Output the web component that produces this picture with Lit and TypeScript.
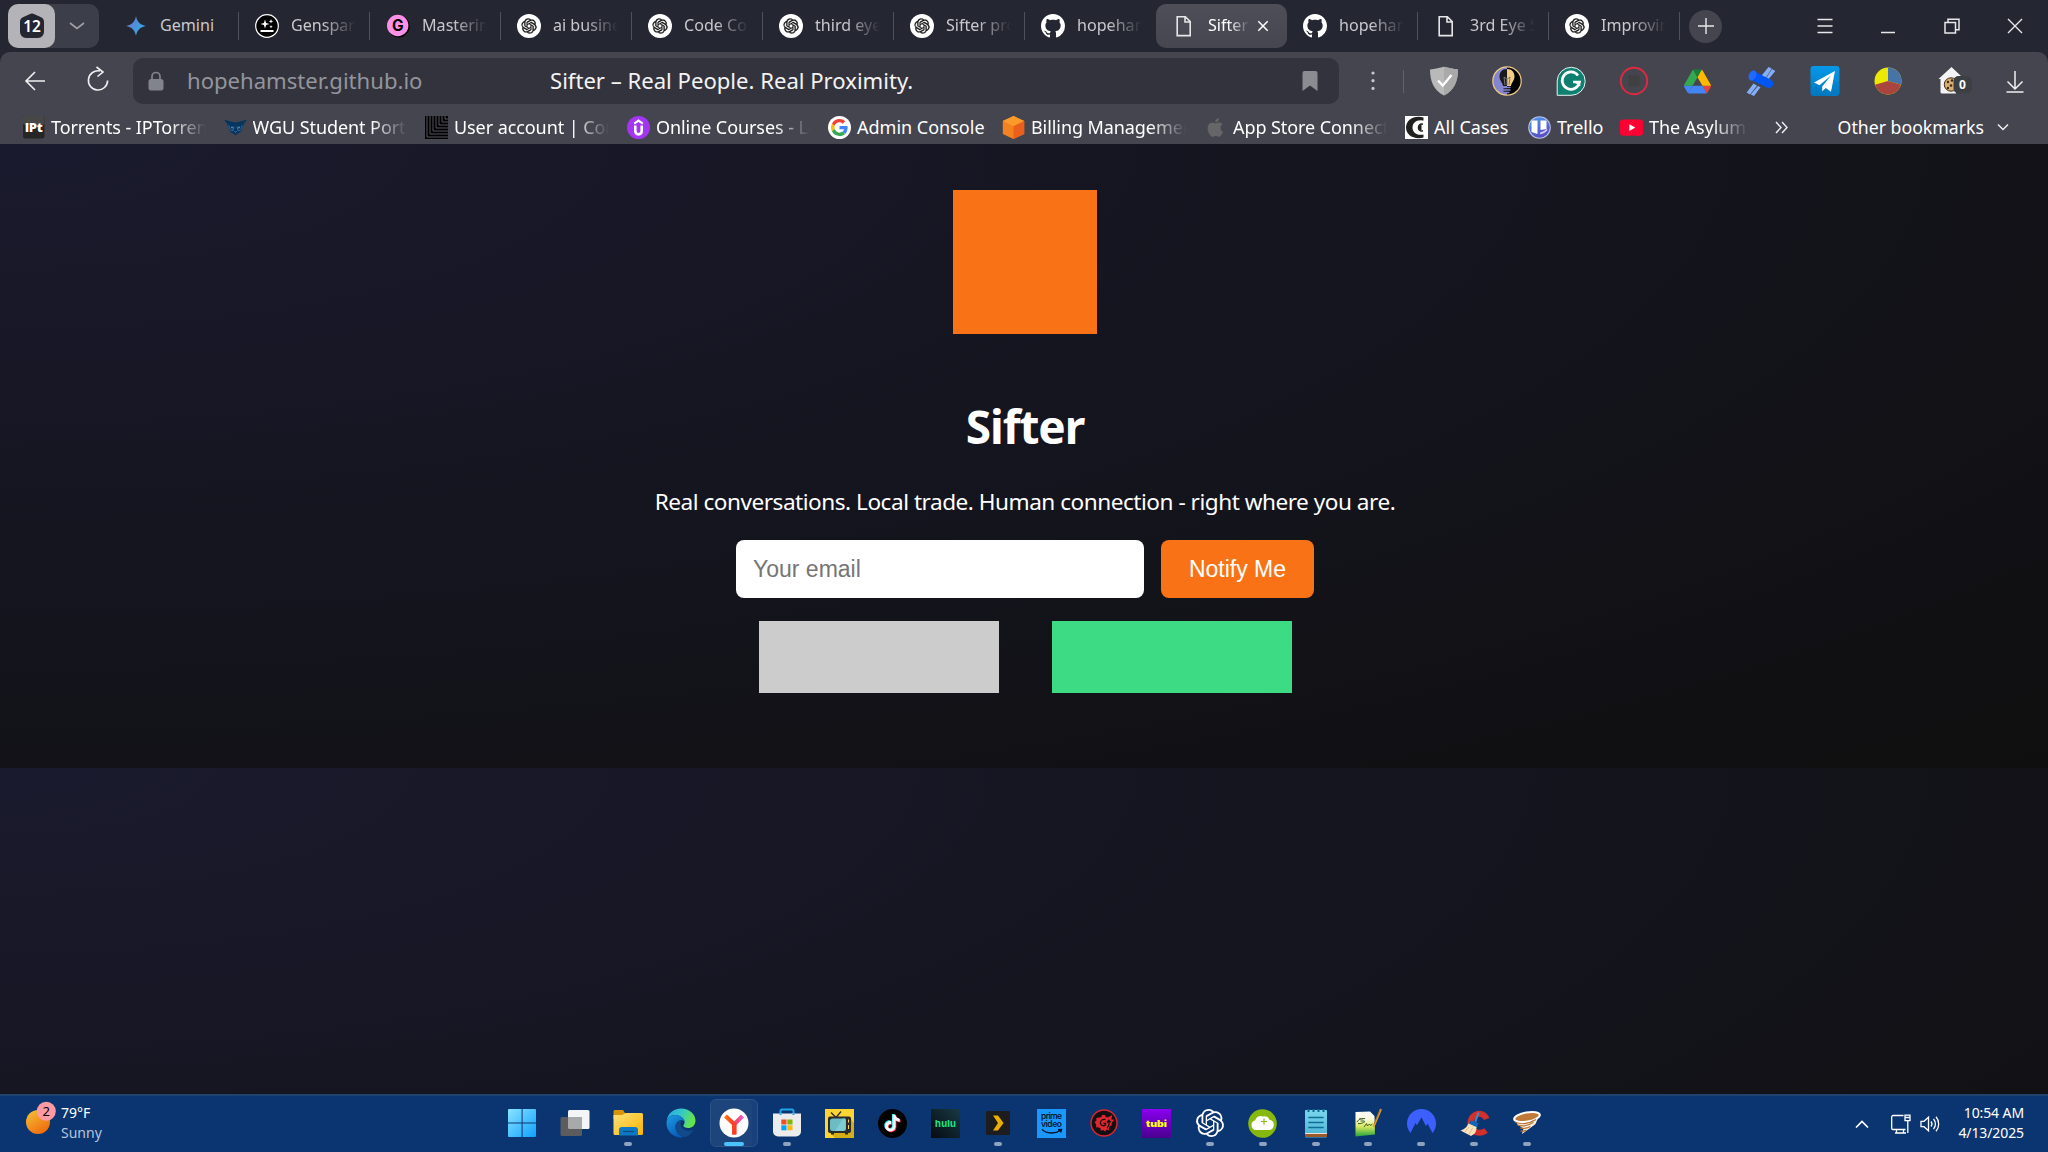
import { LitElement, html, svg, css, nothing, TemplateResult } from "lit";
import { customElement } from "lit/decorators.js";
import { classMap } from "lit/directives/class-map.js";
import { styleMap } from "lit/directives/style-map.js";

const icon = (w: number, h: number, box: string, body: unknown) =>
  html`<svg class="ic" width=${w} height=${h} viewBox=${box} fill="none">${body}</svg>`;

const KNOT =
  "M22.2819 9.8211a5.9847 5.9847 0 0 0-.5157-4.9108 6.0462 6.0462 0 0 0-6.5098-2.9A6.0651 6.0651 0 0 0 4.9807 4.1818a5.9847 5.9847 0 0 0-3.9977 2.9 6.0462 6.0462 0 0 0 .7427 7.0966 5.98 5.98 0 0 0 .511 4.9107 6.051 6.051 0 0 0 6.5146 2.9001A5.9847 5.9847 0 0 0 13.2599 24a6.0557 6.0557 0 0 0 5.7718-4.2058 5.9894 5.9894 0 0 0 3.9977-2.9001 6.0557 6.0557 0 0 0-.7475-7.0729zm-9.022 12.6081a4.4755 4.4755 0 0 1-2.8764-1.0408l.1419-.0804 4.7783-2.7582a.7948.7948 0 0 0 .3927-.6813v-6.7369l2.02 1.1686a.071.071 0 0 1 .038.052v5.5826a4.504 4.504 0 0 1-4.4945 4.4944zm-9.6607-4.1254a4.4708 4.4708 0 0 1-.5346-3.0137l.142.0852 4.783 2.7582a.7712.7712 0 0 0 .7806 0l5.8428-3.3685v2.3324a.0804.0804 0 0 1-.0332.0615L9.74 19.9502a4.4992 4.4992 0 0 1-6.1408-1.6464zM2.3408 7.8956a4.485 4.485 0 0 1 2.3655-1.9728V11.6a.7664.7664 0 0 0 .3879.6765l5.8144 3.3543-2.0201 1.1685a.0757.0757 0 0 1-.071 0l-4.8303-2.7865A4.504 4.504 0 0 1 2.3408 7.872zm16.5963 3.8558L13.1038 8.364 15.1192 7.2a.0757.0757 0 0 1 .071 0l4.8303 2.7913a4.4944 4.4944 0 0 1-.6765 8.1042v-5.6772a.79.79 0 0 0-.407-.667zm2.0107-3.0231l-.142-.0852-4.7735-2.7818a.7759.7759 0 0 0-.7854 0L9.409 9.2297V6.8974a.0662.0662 0 0 1 .0284-.0615l4.8303-2.7866a4.4992 4.4992 0 0 1 6.6802 4.66zM8.3065 12.863l-2.02-1.1638a.0804.0804 0 0 1-.038-.0567V6.0742a4.4992 4.4992 0 0 1 7.3757-3.4537l-.142.0805L8.704 5.459a.7948.7948 0 0 0-.3927.6813zm1.0976-2.3654l2.602-1.4998 2.6069 1.4998v2.9994l-2.5974 1.4997-2.6067-1.4997Z";
const NOTE =
  "M12.525.02c1.31-.02 2.61-.01 3.91-.02.08 1.53.63 3.09 1.75 4.17 1.12 1.11 2.7 1.62 4.24 1.79v4.03c-1.44-.05-2.89-.35-4.2-.97-.57-.26-1.1-.59-1.62-.93-.01 2.92.01 5.84-.02 8.75-.08 1.4-.54 2.79-1.35 3.94-1.31 1.92-3.58 3.17-5.91 3.21-1.43.08-2.86-.31-4.08-1.03-2.02-1.19-3.44-3.37-3.65-5.71-.02-.5-.03-1-.01-1.49.18-1.9 1.12-3.72 2.58-4.96 1.66-1.44 3.98-2.13 6.15-1.72.02 1.48-.04 2.96-.04 4.44-.99-.32-2.15-.23-3.02.37-.63.41-1.11 1.04-1.36 1.75-.21.51-.15 1.07-.14 1.61.24 1.64 1.82 3.02 3.5 2.87 1.12-.01 2.19-.66 2.77-1.61.19-.33.4-.67.41-1.06.1-1.79.06-3.57.07-5.36.01-4.03-.01-8.05.02-12.07z";
const APPLE =
  "M12.152 6.896c-.948 0-2.415-1.078-3.96-1.04-2.04.027-3.91 1.183-4.961 3.014-2.117 3.675-.546 9.103 1.519 12.09 1.013 1.454 2.208 3.09 3.792 3.039 1.52-.065 2.09-.987 3.935-.987 1.831 0 2.35.987 3.96.948 1.637-.026 2.676-1.48 3.676-2.948 1.156-1.688 1.636-3.325 1.662-3.415-.039-.013-3.182-1.221-3.22-4.857-.026-3.04 2.48-4.494 2.597-4.559-1.429-2.09-3.623-2.324-4.39-2.376-2-.156-3.675 1.09-4.61 1.09zM15.53 3.83c.843-1.012 1.4-2.427 1.245-3.83-1.207.052-2.662.805-3.532 1.818-.78.896-1.454 2.338-1.273 3.714 1.338.104 2.715-.831 3.56-1.702";
const OCTO =
  "M8 0C3.58 0 0 3.58 0 8c0 3.54 2.29 6.53 5.47 7.59.4.07.55-.17.55-.38 0-.19-.01-.82-.01-1.49-2.01.37-2.53-.49-2.69-.94-.09-.23-.48-.94-.82-1.13-.28-.15-.68-.52-.01-.53.63-.01 1.08.58 1.23.82.72 1.21 1.87.87 2.33.66.07-.52.28-.87.51-1.07-1.78-.2-3.64-.89-3.64-3.95 0-.87.31-1.59.82-2.15-.08-.2-.36-1.02.08-2.12 0 0 .67-.21 2.2.82.64-.18 1.32-.27 2-.27s1.36.09 2 .27c1.53-1.04 2.2-.82 2.2-.82.44 1.1.16 1.92.08 2.12.51.56.82 1.27.82 2.15 0 3.07-1.87 3.75-3.65 3.95.29.25.54.73.54 1.48 0 1.07-.01 1.93-.01 2.2 0 .21.15.46.55.38A8.01 8.01 0 0 0 16 8c0-4.42-3.58-8-8-8z";

/* Tab favicons, 24px box */
const chatIcon = () => icon(24, 24, "0 0 24 24", svg`<circle cx="12" cy="12" r="12" fill="#fff"/><path transform="translate(4.4 4.4) scale(.633)" d=${KNOT} fill="#111" stroke="#111" stroke-width=".5"/>`);
const githubIcon = () => icon(24, 24, "0 0 16 16", svg`<path d=${OCTO} fill="#fff"/>`);
const fileIcon = () => icon(24, 24, "0 0 24 24", svg`<path d="M5.200 2.800h8.200l4.800 4.800v14H5.200zM13 3v5h5" stroke="#e6e6e8" stroke-width="1.600"/>`);
const geminiIcon = () => icon(24, 24, "0 0 24 24", svg`<defs><linearGradient id="gem" x1="0" y1="0" x2="1" y2=".6"><stop offset="0" stop-color="#b070b8"/><stop offset=".4" stop-color="#5a86d8"/><stop offset="1" stop-color="#2bb0e0"/></linearGradient></defs><path d="M12 2c.9 5.600 4.400 9.100 10 10-5.600.9-9.100 4.400-10 10-.9-5.600-4.400-9.100-10-10 5.600-.9 9.100-4.400 10-10z" fill="url(#gem)"/>`);
const sparkIcon = () => icon(24, 24, "0 0 24 24", svg`<circle cx="12" cy="12" r="11.300" fill="#000" stroke="#fff" stroke-width="1.200"/><path d="M10 5.500l1.100 3.400 3.400 1.100-3.400 1.100-1.100 3.400-1.100-3.400-3.400-1.100 3.400-1.100zM16 5l.6 1.700 1.700.6-1.700.6-.6 1.700-.6-1.700-1.700-.6 1.700-.6zM16 11l.5 1.300 1.300.5-1.300.5-.5 1.300-.5-1.300-1.300-.5 1.300-.5z" fill="#fff"/><path d="M5.500 17h13" stroke="#fff" stroke-width="2"/>`);
const masterIcon = () => icon(24, 24, "0 0 24 24", svg`<circle cx="12.700" cy="12.500" r="11" fill="#000"/><circle cx="11.700" cy="11.500" r="10.700" fill="#ff90e8"/><text x="11.700" y="17" text-anchor="middle" font-family="Inter,sans-serif" font-weight="700" font-size="15.500" fill="#000">G</text>`);

/* Bookmark favicons, 23px box */
const iptIcon = () => icon(23, 23, "0 0 23 23", svg`<rect x="1" y="0" width="21.500" height="22.500" rx="2" fill="#262626"/><rect x="1" y="0" width="21.500" height="9" rx="2" fill="#474747"/><text x="11.700" y="16" text-anchor="middle" textLength="18" font-family="Open Sans,sans-serif" font-weight="800" font-size="13" fill="#fff">IPt</text>`);
const owlIcon = () => icon(23, 23, "0 0 23 23", svg`<path d="M.5 4c3 0 5 1.500 11 2.500C17.500 5.500 19.500 4 22.500 4c-.5 2-2.500 3-3 4.500-.3 3.500-1.500 5.500-3 7.500-1.500 1-3 1.500-5 3.500-2-2-3.500-2.500-5-3.500-1.500-2-2.700-4-3-7.500C3 7 1 6 .5 4z" fill="#06365f"/><path d="M5 9.500c0 4 1.500 5.300 4 5l1-4M18 9.500c0 4-1.500 5.300-4 5l-1-4M10.300 15l1.200 1.500 1.200-1.500" stroke="#3a6f97" stroke-width="1"/><circle cx="8" cy="11.500" r="1" fill="#5e8caf"/><circle cx="15" cy="11.500" r="1" fill="#5e8caf"/>`);
const mazeIcon = () => icon(23, 23, "0 0 23 23", svg`<rect width="23" height="23" fill="#000"/><path d="M2 0v21h21M5 0v18h18M8 0v15h15M11 0v12h12M14 0v9h9M17 0v6h6M20 0v3h3" stroke="#60606a" stroke-width=".9"/>`);
const udemyIcon = () => icon(23, 23, "0 0 23 23", svg`<circle cx="11.500" cy="11.500" r="11.500" fill="#a435f0"/><path d="M7.200 7.600l4.300-2.900 4.300 2.900" stroke="#fff" stroke-width="2.200"/><path d="M8.300 9.500v5.300c0 4.700 6.400 4.700 6.400 0V9.500" stroke="#fff" stroke-width="2.600"/>`);
const googleIcon = () => icon(23, 23, "0 0 23 23", svg`<circle cx="11.500" cy="11.500" r="11.500" fill="#fff"/><g transform="translate(3 3) scale(.354)"><path fill="#EA4335" d="M24 9.500c3.540 0 6.710 1.220 9.210 3.600l6.850-6.850C35.900 2.380 30.470 0 24 0 14.620 0 6.510 5.380 2.560 13.220l7.980 6.190C12.430 13.720 17.740 9.500 24 9.500z"/><path fill="#4285F4" d="M46.980 24.550c0-1.570-.15-3.090-.38-4.550H24v9.020h12.940c-.58 2.960-2.260 5.480-4.780 7.180l7.730 6c4.510-4.180 7.090-10.360 7.090-17.650z"/><path fill="#FBBC05" d="M10.530 28.590c-.48-1.450-.76-2.990-.76-4.590s.27-3.140.76-4.590l-7.980-6.190C.92 16.460 0 20.120 0 24c0 3.880.92 7.540 2.560 10.780l7.970-6.190z"/><path fill="#34A853" d="M24 48c6.480 0 11.930-2.130 15.890-5.810l-7.730-6c-2.150 1.450-4.920 2.300-8.160 2.300-6.260 0-11.570-4.220-13.470-9.910l-7.980 6.190C6.510 42.620 14.620 48 24 48z"/></g>`);
const cubeIcon = () => icon(23, 23, "0 0 23 23", svg`<path d="M11.500 0l10.700 5v13L11.500 23 .8 18V5z" fill="#f58220"/><path d="M.8 5l10.700-5 10.700 5-10.700 5.200z" fill="#fb9a2b"/><path d="M11.500 10.200L22.200 5v13L11.500 23z" fill="#ea5f1c"/>`);
const appleIcon = () => icon(23, 23, "0 0 24 24", svg`<path transform="translate(2 2) scale(.82)" d=${APPLE} fill="#666668"/>`);
const casesIcon = () => icon(23, 23, "0 0 23 23", svg`<rect width="23" height="23" fill="#fff"/><path d="M18.500 1.500C9-1 1 4 1 11.500S9 24 18.500 21.500v-4h-2V5.500h2z" fill="#20201f"/><path d="M20 4.800C12 2.500 7.500 6.500 7.500 11.500s4.500 9 12.500 6.700V14c-3 1.300-6.200.5-6.200-2.500S17 7.700 20 9z" fill="#fff"/><path d="M18 8.200c-3.200-.6-4.500 1-4.500 3.300s1.300 3.900 4.500 3.300" stroke="#20201f" stroke-width="1.600"/>`);
const trelloIcon = () => icon(23, 23, "0 0 23 23", svg`<defs><linearGradient id="tre" x1="0" y1="0" x2=".4" y2="1"><stop offset="0" stop-color="#4d9bf5"/><stop offset="1" stop-color="#5a4fc4"/></linearGradient></defs><circle cx="11.500" cy="11.500" r="11.300" fill="#b9c3e6"/><circle cx="11.500" cy="11.500" r="10.300" fill="url(#tre)"/><path d="M3.500 4.500h6v13.500l-6-2zM12.500 4.500h6v8.500l-6 1z" fill="#fff"/><path d="M12 17.500c3-.5 5.500-2 7-4" stroke="#d7cdfa" stroke-width="1.500"/>`);
const tubeIcon = () => icon(23, 23, "0 0 23 23", svg`<rect y="3.500" width="23" height="16.300" rx="3" fill="#ff0033"/><path d="M9.300 8.300l6 3.300-6 3.300z" fill="#fff"/>`);

/* Extension icons, 30px box */
const shieldExt = () => icon(30, 30, "0 0 30 30", svg`<path d="M1 3.500C6 3 11 2 15 .8c4 1.200 9 2.200 14 2.700 0 12-4 21-14 26C5 24.500 1 15.500 1 3.500z" fill="#b9b9b9"/><path d="M15 .8c4 1.200 9 2.200 14 2.700 0 12-4 21-14 26z" fill="#a9a9a9"/><path d="M9 14.500l4.800 5L22.500 9" stroke="#fff" stroke-width="2.400"/>`);
const bulbExt = () => icon(30, 30, "0 0 30 30", svg`<circle cx="15" cy="15" r="14.200" fill="#000"/><path d="M15 .8a14.200 14.200 0 0 0 0 28.400z" fill="#8585cf"/><path d="M15 3c-5 0-7.500 3.500-7.500 7.500s3 6 3.500 9.500h4z" fill="#1a1a1e"/><path d="M15 3c5 0 7.500 3.500 7.500 7.500s-3 6-3.500 9.500h-4z" fill="#f3cc86"/><path d="M12 11l1 8M18 11l-1 8M12 11l3 2 3-2M15 13v6" stroke="#777" stroke-width="1"/><path d="M11.500 21.500h7M11.500 24h7M12.500 26.500h5" stroke="#8585cf" stroke-width="1.300"/><path d="M11.500 22.700h3.500M11.500 25.200h3.500" stroke="#1a1a1e" stroke-width="1"/><circle cx="15" cy="15" r="14.200" stroke="#f3cc86" stroke-width="1.200"/>`);
const grammarExt = () => icon(30, 30, "0 0 30 30", svg`<path d="M1.200 29.300V15A14 14 0 1 1 15 29.300z" fill="#0f8070" stroke="#e8f3f1" stroke-width="1"/><path d="M22 9.500a8.700 8.700 0 1 0 1.500 6.500h-6.500" stroke="#fff" stroke-width="2.700"/><path d="M19.500 17.500l4-1.500 1 4" fill="#fff"/>`);
const recordExt = () => icon(30, 30, "0 0 30 30", svg`<circle cx="15" cy="15" r="13.200" stroke="#dc2a40" stroke-width="2"/><rect x="9.500" y="9.500" width="11" height="11" fill="#404040"/>`);
const driveExt = () => icon(27, 25, "0 0 87.3 78", svg`<path d="m6.600 66.850 3.850 6.650c.8 1.400 1.950 2.500 3.300 3.300l13.750-23.800h-27.500c0 1.550.4 3.100 1.200 4.500z" fill="#4285f4"/><path d="m43.650 25-13.750-23.800c-1.350.8-2.500 1.900-3.300 3.300l-25.400 44a9.060 9.060 0 0 0-1.200 4.500h27.500z" fill="#34a853"/><path d="m73.550 76.800c1.350-.8 2.500-1.900 3.300-3.300l1.600-2.750 7.650-13.250c.8-1.400 1.200-2.950 1.200-4.500h-27.502l5.852 11.500z" fill="#ea4335"/><path d="m43.650 25 13.750-23.800c-1.350-.8-2.900-1.200-4.500-1.200h-18.500c-1.600 0-3.150.45-4.500 1.200z" fill="#188038"/><path d="m59.800 53h-32.300l-13.750 23.800c1.350.8 2.900 1.200 4.500 1.200h50.800c1.600 0 3.150-.45 4.500-1.200z" fill="#4285f4"/><path d="m73.400 26.500-12.700-22c-.8-1.400-1.950-2.500-3.300-3.300l-13.750 23.800 16.150 28h27.450c0-1.550-.4-3.100-1.200-4.500z" fill="#ffba00"/>`);
const satelliteExt = () => icon(30, 30, "0 0 30 30", svg`<g fill="#85aef8"><path d="M22.500 1l3.200 1.500-6 9.500-4-2.600z"/><path d="M26 3l3.300 2-7 8.500-2-1.500z"/><path d="M7.500 17.500l3.500 2.300-7 8.700-3.300-2z"/><path d="M12 20l2.500 1.300L8 30l-3.300-1.500z"/></g><rect x="3" y="9.500" width="25" height="9" rx="4.500" transform="rotate(26 15.500 14)" fill="#0057f5"/><ellipse cx="6.500" cy="9.500" rx="3.600" ry="5.200" transform="rotate(26 6.500 9.500)" fill="#1f6afc"/>`);
const telegramExt = () => icon(30, 30, "0 0 30 30", svg`<defs><linearGradient id="tg" x1="0" y1="0" x2="0" y2="1"><stop offset="0" stop-color="#0798ea"/><stop offset="1" stop-color="#0077bd"/></linearGradient></defs><rect x=".5" width="29" height="30" rx="3" fill="url(#tg)"/><path d="M25 5L4 16.500l5.500 2.700L21 9.500 12.200 20.500v4.700l3.600-3.100 5.200 3.700z" fill="#fff"/>`);
const pieExt = () => icon(28, 28, "0 0 28 28", svg`<circle cx="14" cy="14" r="13.500" fill="#ece800"/><path d="M14 14V.5a13.500 13.500 0 0 1 13 17.200z" fill="#4673a8"/><path d="M14 14l13 3.700a13.500 13.500 0 0 1-26 0z" fill="#a9443f"/>`);
const cookieExt = () => icon(36, 30, "0 0 36 30", svg`<path d="M4.500 13L17.500 1l9.500 9v3h-5v14.500H8a1.500 1.500 0 0 1-1.500-1.500V13z" fill="#f4f4f4"/><circle cx="17" cy="18.500" r="6.700" fill="#d9ae70" stroke="#3c2a1a" stroke-width="1"/><circle cx="14" cy="16" r="1.200" fill="#3c2a1a"/><circle cx="18" cy="14.500" r="1.200" fill="#3c2a1a"/><circle cx="17" cy="19.500" r="1.300" fill="#3c2a1a"/><circle cx="14" cy="22" r="1.200" fill="#3c2a1a"/><rect x="19.500" y="10" width="18.500" height="17.500" rx="5" fill="#3c4043"/><text x="28.500" y="23" text-anchor="middle" font-family="Noto Sans,sans-serif" font-weight="700" font-size="12" fill="#fff">0</text>`);
const downloadExt = () => icon(30, 30, "0 0 30 30", svg`<path d="M15 5v18M7.500 15.500L15 23l7.500-7.500M6.500 26h17" stroke="#f0f0f2" stroke-width="1.500"/>`);

/* Taskbar icons, 28px box */
const startApp = () => icon(28, 28, "0 0 28 28", svg`<defs><linearGradient id="win" x1="0" y1="0" x2="28" y2="28" gradientUnits="userSpaceOnUse"><stop offset="0" stop-color="#8ae3ff"/><stop offset="1" stop-color="#0fa0ff"/></linearGradient></defs><path d="M0 1a1 1 0 0 1 1-1h12.600v13.600H0zM14.600 0H27a1 1 0 0 1 1 1v12.600H14.600zM0 14.600h13.600V28H1a1 1 0 0 1-1-1zM14.600 14.600H28V27a1 1 0 0 1-1 1H14.600z" fill="url(#win)"/>`);
const viewApp = () => icon(30, 28, "0 0 30 28", svg`<rect x="8" y="1" width="21.500" height="19" rx="1.500" fill="#f4f5f7"/><rect x=".5" y="8" width="21.500" height="19" rx="1.500" fill="#5c5c5e"/><path d="M8 8h12.500A1.500 1.500 0 0 1 22 9.500V20H9.500A1.500 1.500 0 0 1 8 18.500z" fill="#a8a9ab"/>`);
const folderApp = () => icon(30, 28, "0 0 30 28", svg`<defs><linearGradient id="fo" x1="0" y1="0" x2="1" y2="1"><stop offset="0" stop-color="#ffe07c"/><stop offset="1" stop-color="#f9b500"/></linearGradient></defs><path d="M.5 2.500A1.500 1.500 0 0 1 2 1h8l2 3v6H.5z" fill="#d9940a"/><path d="M.5 6h9l3-2h16A1.500 1.500 0 0 1 30 5.500v19a1.500 1.500 0 0 1-1.500 1.500H2A1.500 1.500 0 0 1 .500 24.500z" fill="url(#fo)"/><path d="M6 26.500V21a3 3 0 0 1 3-3h13a3 3 0 0 1 3 3v5.500z" fill="#0f78c4"/><path d="M10 22.500h11" stroke="#0a4a80" stroke-width="1.200"/>`);
const edgeApp = () => icon(30, 30, "0 0 30 30", svg`<defs><linearGradient id="ed1" x1="0" y1="0" x2="1" y2=".3"><stop offset="0" stop-color="#25a5e8"/><stop offset=".55" stop-color="#36c9c6"/><stop offset="1" stop-color="#66e34c"/></linearGradient><linearGradient id="ed2" x1="0" y1="0" x2=".6" y2="1"><stop offset="0" stop-color="#1b9de2"/><stop offset="1" stop-color="#0a5ab8"/></linearGradient></defs><path d="M.7 13C1.500 5.500 7.500.5 15 .5c8.500 0 14.500 6 14.500 12 0 5-3.500 7.500-7.500 7.500-2.500 0-4.700-1-4.700-2.200 0-.8 1.300-1.500 1.300-3.600C18.600 10.500 14 7 9 7 4.500 7 1.500 10 .7 13z" fill="url(#ed1)"/><path d="M.5 15C.7 10 4.500 7 9 7c5 0 8.500 3 9.500 6-4.500-2-9 1-9 6 0 5.500 4.500 9.500 9 10.100-1.300.3-2.300.4-3.500.4C7 29.500.5 23 .5 15z" fill="url(#ed2)"/><path d="M9.500 19c0-4 3-6.800 6.500-6.500-3 3-1 9 5 10 3 .5 5-.3 6.500-.9-1.700 4-5.500 7-9 7.500-4.500-.6-9-4.600-9-10.100z" fill="#114a8b"/>`);
const yandexApp = () => icon(30, 30, "0 0 30 30", svg`<defs><linearGradient id="ya" x1="5" y1="6" x2="24" y2="8" gradientUnits="userSpaceOnUse"><stop offset="0" stop-color="#ff7a00"/><stop offset=".5" stop-color="#fc3f2c"/><stop offset="1" stop-color="#e85ccf"/></linearGradient></defs><circle cx="15" cy="15" r="14.500" fill="#fff"/><path d="M6.500 8l8.800 8.300L23.500 8M15.300 15.500V26.500" stroke="url(#ya)" stroke-width="4.200"/><path d="M15.300 15.500V26.500" stroke="#fc3f1d" stroke-width="4.200"/>`);
const storeApp = () => icon(28, 30, "0 0 28 30", svg`<path d="M7.500 8V3A1.500 1.500 0 0 1 9 1.500h10A1.500 1.500 0 0 1 20.500 3v5" stroke="#1fa3ea" stroke-width="2"/><path d="M0 5.500h28v18a5 5 0 0 1-5 5H5a5 5 0 0 1-5-5z" fill="#ececee"/><path d="M7.500 5.500V7M20.500 5.500V7" stroke="#1fa3ea" stroke-width="2"/><rect x="8.300" y="11.500" width="5.200" height="5" fill="#f04e24"/><rect x="14.300" y="11.500" width="5.200" height="5" fill="#7cba06"/><rect x="8.300" y="17.300" width="5.200" height="5" fill="#07a4ef"/><rect x="14.300" y="17.300" width="5.200" height="5" fill="#fdb90a"/>`);
const tvApp = () => icon(29, 29, "0 0 29 29", svg`<rect width="29" height="29" fill="#fcd535"/><path d="M26 10l3 4v15H10l-5-5z" fill="#d4ae18"/><path d="M6 3.500l5 5 5-6" stroke="#2b2b2b" stroke-width="1.200"/><rect x="3" y="7.500" width="23" height="16.500" rx="2" fill="#2b2b2b"/><rect x="5" y="9.500" width="16" height="12.500" rx="2.500" fill="#6bbcc3"/><path d="M10 22l8-12.500h2.500v10.500l-2 2z" fill="#7fcdd2"/><path d="M23.500 10.500v3M23.500 16v4" stroke="#fcd535" stroke-width="1"/><path d="M6 24.500h3M20 24.500h3" stroke="#2b2b2b" stroke-width="2"/>`);
const tiktokApp = () => icon(29, 29, "0 0 29 29", svg`<circle cx="14.500" cy="14.500" r="14.500" fill="#000"/><g transform="translate(6 5.700) scale(.7)"><path d=${NOTE} transform="translate(-1.200 -1)" fill="#25f4ee"/><path d=${NOTE} transform="translate(1.200 1)" fill="#fe2c55"/><path d=${NOTE} fill="#fff"/></g>`);
const huluApp = () => icon(29, 29, "0 0 29 29", svg`<defs><linearGradient id="hu" x1="1" y1="0" x2="0" y2="1"><stop offset="0" stop-color="#183a44"/><stop offset="1" stop-color="#060a10"/></linearGradient></defs><rect width="29" height="29" fill="url(#hu)"/><text x="14.500" y="18" text-anchor="middle" textLength="21" font-family="Inter,sans-serif" font-weight="700" font-size="9.500" fill="#1ce783">hulu</text>`);
const plexApp = () => icon(24, 24, "0 0 24 24", svg`<rect width="24" height="24" rx="1.500" fill="#1d1d1f"/><path d="M7 4.500h5l5.500 7.500-5.500 7.500H7l5-7.500z" fill="#ebaf00"/>`);
const primeApp = () => icon(29, 29, "0 0 29 29", svg`<rect width="29" height="29" fill="#1a98ff"/><g font-family="Inter,sans-serif" font-weight="600" font-size="8.500" fill="#06182e" text-anchor="middle"><text x="14.500" y="10" textLength="21">prime</text><text x="14.500" y="18.300" textLength="21">video</text></g><path d="M5 20.500c5 4.500 13 4.500 18.500 1M21 20.700l3.500-.2-.8 3" stroke="#06182e" stroke-width="1.400"/>`);
const gearApp = () => icon(28, 28, "0 0 28 28", svg`<circle cx="14" cy="14" r="13" fill="#140f12" stroke="#d8262e" stroke-width="1.500"/><path d="M9.500 8.500l2-.5.500-2h3l.7 2 2 .5 4.500-2.500-.8 4.500 3 .2-2.700 3v2.800l-2.200.7-.7 2 .2 2.300-2.300-.9-1.700 1.900-1.700-1.500-2.500.8-.3-2.500-2.500-1-1.800.2v-3L4.500 13l2-1.500-.3-2.500z" fill="#e0262f"/><path d="M15.500 10.500c-3.500-.5-5.500 1.500-5 4s3.500 3 5 1.300v-1.500h-2M17 19c2.200-2 2.300-5 1.800-7.500l-1.800 2M18.800 11.500l2 1.500" stroke="#140f12" stroke-width="1.300"/>`);
const tubiApp = () => icon(29, 29, "0 0 29 29", svg`<defs><linearGradient id="tu" x1="0" y1="0" x2="0" y2="1"><stop offset="0" stop-color="#8a00f0"/><stop offset="1" stop-color="#4a0090"/></linearGradient></defs><rect width="29" height="29" fill="url(#tu)"/><text x="14.500" y="17.500" text-anchor="middle" textLength="21" lengthAdjust="spacingAndGlyphs" font-family="Inter,sans-serif" font-weight="900" font-size="9" fill="#ffff13">tubi</text>`);
const knotApp = () => icon(28, 28, "0 0 24 24", svg`<path d=${KNOT} fill="#fff"/>`);
const cloudApp = () => icon(29, 29, "0 0 29 29", svg`<circle cx="14.500" cy="14.500" r="14.300" fill="#86b80e"/><path d="M8 21a5 5 0 0 1-.8-9.800A5.500 5.500 0 0 1 15 7.500a5 5 0 0 1 6.500 3.200A5.200 5.200 0 0 1 21 21z" fill="#fff"/><path d="M16 9.500v6M13 12.500h6" stroke="#86b80e" stroke-width="1.200"/>`);
const notepadApp = () => icon(22, 30, "0 0 22 30", svg`<defs><linearGradient id="np" x1="0" y1="0" x2="0" y2="1"><stop offset="0" stop-color="#7ad6ee"/><stop offset="1" stop-color="#4bb2d4"/></linearGradient></defs><rect y="2" width="22" height="27.500" rx="1" fill="url(#np)"/><path d="M0 25.500h22V29H0z" fill="#9a5a2c"/><path d="M0 25.500h22" stroke="#e8e2da"/><path d="M3.500 1v3M8.500 1v3M13.500 1v3M18.500 1v3" stroke="#0f6a92" stroke-width="2"/><path d="M4 9.500h14M4 14.500h14M4 19.500h14" stroke="#0d6f94" stroke-width="1.600" stroke-linecap="round"/>`);
const nppApp = () => icon(28, 30, "0 0 28 30", svg`<defs><linearGradient id="pp" x1="0" y1="0" x2="0" y2="1"><stop offset="0" stop-color="#fdfdf8"/><stop offset=".3" stop-color="#fafbe0"/><stop offset=".6" stop-color="#d9e95e"/><stop offset="1" stop-color="#23a43a"/></linearGradient></defs><path d="M1.500 4l14.500-.5 4.500 4.500.5 18.500L1.500 28.500z" fill="url(#pp)"/><path d="M3 14c2-3 4-3.500 6-3M5 11l6-.5M4 15.500c3 .5 5-.5 7-2M6.500 13h4M10 19l2.500-3.500 1 2.500 2-2 1 1.500 2-1.500" stroke="#3c5f2a" stroke-width="1"/><path d="M27 1l-6.500 15.500-1 2.500" stroke="#e3a02f" stroke-width="2"/><path d="M26.300 1.200l-6 14.500" stroke="#7d4b12" stroke-width=".6"/>`);
const nordApp = () => icon(29, 29, "0 0 29 29", svg`<path d="M3.500 24A14.500 14.500 0 1 1 25.500 24L20.500 14.500l-1.500 2.700-4.500-9-4.500 8L8.500 14z" fill="#3e5fff"/>`);
const cleanerApp = () => icon(29, 29, "0 0 29 29", svg`<path d="M26.500 10C24.500 5 19 3.500 15 6s-6 8-3.500 13 9.500 6.500 14.500 2.500" stroke="#d3302a" stroke-width="6"/><path d="M18.500 3.500L15.300 13" stroke="#2f8fe0" stroke-width="2"/><path d="M10.500 11.500l8 2.500-1.500 4.500-8-3z" fill="#1266b3"/><path d="M8.500 14.500l8 3.500c.2 4.500-2 7.500-5.500 9L.500 21.500c3.500-1 6.500-3.500 8-7z" fill="#fbe3bd"/><path d="M9 18l-4 5M12.500 19l-3.500 6.500" stroke="#d9b27e" stroke-width=".8"/>`);
const tornadoApp = () => icon(28, 24, "0 0 28 24", svg`<path d="M2 8l23.500-2-3 7-6 4.500-7.500 5.500 1.500-5.500-6-4z" fill="#fff3e4"/><ellipse cx="14" cy="6" rx="13" ry="4.500" transform="rotate(-10 14 6)" fill="#c07a38" stroke="#fff" stroke-width="2"/><path d="M2 11c7 3.500 14 1.500 21-2.500M4.500 14c6 2 11 .5 16-2.500M7 17c4 1.200 7 .3 10.500-1.500M7.500 20c2.500.4 3.500.2 6-1" stroke="#b87333" stroke-width="1.200"/>`);

interface Tab { label: string; icon: () => TemplateResult; active?: boolean; full?: boolean; noSep?: boolean }
const TABS: Tab[] = [
  { label: "Gemini", icon: geminiIcon, full: true },
  { label: "Genspar", icon: sparkIcon },
  { label: "Masterin", icon: masterIcon },
  { label: "ai busine", icon: chatIcon },
  { label: "Code Co", icon: chatIcon },
  { label: "third eye", icon: chatIcon },
  { label: "Sifter pro", icon: chatIcon },
  { label: "hopeham", icon: githubIcon, noSep: true },
  { label: "Sifter", icon: fileIcon, active: true, noSep: true },
  { label: "hopeham", icon: githubIcon },
  { label: "3rd Eye S", icon: fileIcon },
  { label: "Improvin", icon: chatIcon },
];

interface Mark { label: string; icon: () => TemplateResult; width: number; fade?: boolean }
const MARKS: Mark[] = [
  { label: "Torrents - IPTorrent", icon: iptIcon, width: 201.5, fade: true },
  { label: "WGU Student Porta", icon: owlIcon, width: 201.5, fade: true },
  { label: "User account | Con", icon: mazeIcon, width: 202, fade: true },
  { label: "Online Courses - Le", icon: udemyIcon, width: 201, fade: true },
  { label: "Admin Console", icon: googleIcon, width: 174 },
  { label: "Billing Managemen", icon: cubeIcon, width: 202, fade: true },
  { label: "App Store Connect", icon: appleIcon, width: 201, fade: true },
  { label: "All Cases", icon: casesIcon, width: 123 },
  { label: "Trello", icon: trelloIcon, width: 92 },
  { label: "The Asylum", icon: tubeIcon, width: 146, fade: true },
];

const EXTENSIONS = [shieldExt, bulbExt, grammarExt, recordExt, driveExt, satelliteExt, telegramExt, pieExt, cookieExt, downloadExt];

interface App { icon: () => TemplateResult; state: "idle" | "open" | "active" }
const APPS: App[] = [
  { icon: startApp, state: "idle" },
  { icon: viewApp, state: "idle" },
  { icon: folderApp, state: "open" },
  { icon: edgeApp, state: "idle" },
  { icon: yandexApp, state: "active" },
  { icon: storeApp, state: "open" },
  { icon: tvApp, state: "idle" },
  { icon: tiktokApp, state: "idle" },
  { icon: huluApp, state: "idle" },
  { icon: plexApp, state: "open" },
  { icon: primeApp, state: "idle" },
  { icon: gearApp, state: "idle" },
  { icon: tubiApp, state: "idle" },
  { icon: knotApp, state: "open" },
  { icon: cloudApp, state: "open" },
  { icon: notepadApp, state: "open" },
  { icon: nppApp, state: "open" },
  { icon: nordApp, state: "open" },
  { icon: cleanerApp, state: "open" },
  { icon: tornadoApp, state: "open" },
];

const shared = css`
  * { box-sizing: border-box; }
  .ic { display: block; flex: none; overflow: visible; }
`;

@customElement("tab-strip")
class TabStrip extends LitElement {
  static styles = [shared, css`
    :host { display: flex; height: 52px; padding: 4px 1px 4px 8px; background: #242631; color: #c9c9cd; font: 16.100px/44px "Noto Sans", sans-serif; }
    .group { display: flex; width: 91px; margin-right: 9px; border-radius: 10px; background: #3c3f49; }
    .count { display: flex; align-items: center; justify-content: center; width: 47px; border-radius: 10px; background: #b4b4b8; }
    .expand { display: flex; flex: 1; align-items: center; justify-content: center; }
    .tab { display: flex; align-items: center; width: 131px; padding-left: 16px; position: relative; }
    .tab.sep::after { content: ""; position: absolute; right: 0; top: 8px; width: 1px; height: 28px; background: #50525b; }
    .tab.active { background: linear-gradient(#4e4e58, #464650); border-radius: 10px; color: #fff; }
    .label { width: 65px; margin: -1px 0 1px 12px; overflow: hidden; white-space: nowrap; }
    .fade { mask-image: linear-gradient(90deg, #000 48%, transparent 100%); }
    .active .label { width: 42px; }
    .close { margin-left: 8px; }
    .add { display: flex; align-items: center; justify-content: center; align-self: center; width: 33px; height: 33px; margin-left: 9px; border-radius: 50%; background: #454550; }
    .controls { display: flex; margin-left: auto; }
    .control { display: flex; align-items: center; justify-content: center; width: 63.500px; }
  `];
  render() {
    return html`
      <div class="group">
        <div class="count">${icon(24, 26, "0 0 24 26", svg`<path d="M9.500 1.300a5 5 0 0 1 5 0l6 2.700A5 5 0 0 1 24 8.500V19a6 6 0 0 1-6 6H6a6 6 0 0 1-6-6V8.500A5 5 0 0 1 3.500 4z" fill="#242631"/><text x="12" y="19" text-anchor="middle" font-family="Noto Sans,sans-serif" font-weight="600" font-size="15.500" fill="#fff">12</text>`)}</div>
        <div class="expand">${icon(16, 10, "0 0 16 10", svg`<path d="M1 2l7 5.500L15 2" stroke="#a0a1a7" stroke-width="1.600"/>`)}</div>
      </div>
      ${TABS.map((t) => html`
        <div class=${classMap({ tab: true, active: !!t.active, sep: !t.noSep })}>
          ${t.icon()}
          <span class=${classMap({ label: true, fade: !t.full })}>${t.label}</span>
          ${t.active ? html`<span class="close">${icon(10, 10, "0 0 10 10", svg`<path d="M.3.3l9.400 9.400M9.700.3L.3 9.700" stroke="#fff" stroke-width="1.500"/>`)}</span>` : nothing}
        </div>`)}
      <div class="add">${icon(16, 16, "0 0 16 16", svg`<path d="M8 0v16M0 8h16" stroke="#e8e8ea" stroke-width="1.400"/>`)}</div>
      <div class="controls">
        <div class="control">${icon(16, 16, "0 0 16 16", svg`<path d="M.5 1.500h15M.5 8h15M.5 14.500h15" stroke="#e8e8ea" stroke-width="1.400"/>`)}</div>
        <div class="control">${icon(14, 16, "0 0 14 16", svg`<path d="M0 14.500h14" stroke="#e8e8ea" stroke-width="1.500"/>`)}</div>
        <div class="control">${icon(16, 16, "0 0 16 16", svg`<path d="M1 4.500h10.500V15H1zM4 4.500V1.300h11v10.500h-3.500" stroke="#e8e8ea" stroke-width="1.500"/>`)}</div>
        <div class="control">${icon(14, 14, "0 0 14 14", svg`<path d="M0 0l14 14M14 0L0 14" stroke="#e8e8ea" stroke-width="1.400"/>`)}</div>
      </div>`;
  }
}

@customElement("address-row")
class AddressRow extends LitElement {
  static styles = [shared, css`
    :host { display: flex; height: 52px; padding: 0 1px 0 0; align-items: center; font: 22.100px/45px "Noto Sans", sans-serif; }
    .nav { display: flex; align-items: center; justify-content: center; width: 64px; height: 52px; padding-top: 6px; }
    .nav.first { width: 66px; padding-left: 4px; }
    .nav.reload { padding-top: 2px; }
    .bar { display: flex; align-items: center; width: 1206px; height: 46px; margin: 6px 0 0 3px; padding: 0 21px 0 15px; border-radius: 10px; background: #33333d; }
    .host { width: 235px; margin: -2px 0 0 23px; color: #94959c; white-space: nowrap; }
    .title { flex: 1; margin: -2px 0 0 128px; color: #f3f3f4; white-space: nowrap; }
    .dots { margin: 6px 0 0 32px; }
    .rule { width: 1px; height: 23px; margin: 6px 0 0 28px; background: #62626b; }
    .exts { display: flex; margin: 6px 0 0 auto; }
    .ext { display: flex; align-items: center; justify-content: center; width: 63.500px; }
  `];
  render() {
    return html`
      <div class="nav first">${icon(22, 20, "0 0 22 20", svg`<path d="M11 1L2 10l9 9M1.500 10H21" stroke="#f0f0f2" stroke-width="1.600"/>`)}</div>
      <div class="nav reload">${icon(22, 26, "0 0 22 26", svg`<path d="M13 5a9.600 9.600 0 1 0 7.600 9.500" stroke="#f0f0f2" stroke-width="1.600"/><path d="M9.500 1l6.500 5-5.500 4.500" stroke="#f0f0f2" stroke-width="1.600"/>`)}</div>
      <div class="bar">
        ${icon(16, 20, "0 0 16 20", svg`<rect x=".5" y="8" width="15" height="11.500" rx="2.500" fill="#81838d"/><path d="M4 9V5.500a4 4 0 0 1 8 0V9" stroke="#81838d" stroke-width="1.700"/>`)}
        <span class="host">hopehamster.github.io</span>
        <span class="title">Sifter – Real People. Real Proximity.</span>
        ${icon(16, 20, "0 0 16 20", svg`<path d="M.5 2a2 2 0 0 1 2-2h11a2 2 0 0 1 2 2v18L8 14.500.5 20z" fill="#8b8b92"/>`)}
      </div>
      <div class="dots">${icon(4, 20, "0 0 4 20", svg`<circle cx="2" cy="2" r="1.600" fill="#c8c8cc"/><circle cx="2" cy="9.700" r="1.600" fill="#c8c8cc"/><circle cx="2" cy="17.400" r="1.600" fill="#c8c8cc"/>`)}</div>
      <div class="rule"></div>
      <div class="exts">${EXTENSIONS.map((e) => html`<div class="ext">${e()}</div>`)}</div>`;
  }
}

@customElement("bookmark-row")
class BookmarkRow extends LitElement {
  static styles = [shared, css`
    :host { display: flex; align-items: center; height: 40px; padding: 6px 39px 0 22px; color: #fff; font: 18px/28px "Noto Sans", sans-serif; }
    .mark { display: flex; align-items: center; padding-right: 18px; }
    .label { flex: 1; min-width: 0; margin-left: 6px; white-space: nowrap; }
    .fade { overflow: hidden; letter-spacing: -.08px; mask-image: linear-gradient(270deg, transparent, #000 36px); }
    .more { margin-left: 9px; }
    .other { display: flex; align-items: center; gap: 13px; margin-left: auto; white-space: nowrap; font-size: 17.700px; }
  `];
  render() {
    return html`
      ${MARKS.map((m) => html`
        <div class="mark" style=${styleMap({ width: `${m.width}px` })}>
          ${m.icon()}<span class=${classMap({ label: true, fade: !!m.fade })}>${m.label}</span>
        </div>`)}
      <span class="more">${icon(13, 13, "0 0 13 13", svg`<path d="M1 1l5 5.500-5 5.500M7 1l5 5.500L7 12" stroke="#f0f0f2" stroke-width="1.400"/>`)}</span>
      <span class="other"><span>Other bookmarks</span>${icon(12, 8, "0 0 12 8", svg`<path d="M1 1.500l5 5 5-5" stroke="#f0f0f2" stroke-width="1.500"/>`)}</span>`;
  }
}

@customElement("landing-page")
class LandingPage extends LitElement {
  static styles = [shared, css`
    :host { display: flex; flex-direction: column; align-items: center; height: 950px; padding: 46px 0 0 2px; color: #fff; font-family: "Noto Sans", sans-serif; background: radial-gradient(ellipse farthest-corner at top left, #1a1a2e, #0f0f0f) 0 0 / 100% 624px; }
    .logo { width: 144px; height: 144px; background: #f97316; }
    h1 { margin: 59px 0 0; font-size: 46px; line-height: 66px; letter-spacing: -1.100px; }
    .tagline { margin: 27px 0 0; font-size: 22.600px; line-height: 32px; white-space: nowrap; letter-spacing: -.485px; }
    .form { display: flex; gap: 17px; margin-top: 22px; }
    .email { display: block; width: 408px; height: 58px; padding: 0 17px; border: 0; border-radius: 8px; background: #fff; font: 23px "Liberation Sans", Arial, sans-serif; }
    .email::placeholder { color: #757575; opacity: 1; }
    .notify { width: 153px; height: 58px; padding: 0; border: 0; border-radius: 8px; background: #f97316; color: #fff; font: 23px "Liberation Sans", Arial, sans-serif; }
    .stores { display: flex; gap: 53px; margin-top: 23px; }
    .store { width: 240px; height: 72px; background: #ccc; }
    .store.android { background: #3ddc84; }
  `];
  render() {
    return html`
      <div class="logo"></div>
      <h1>Sifter</h1>
      <p class="tagline">Real conversations. Local trade. Human connection - right where you are.</p>
      <div class="form"><input class="email" type="email" placeholder="Your email" /><button class="notify">Notify Me</button></div>
      <div class="stores"><div class="store"></div><div class="store android"></div></div>`;
  }
}

@customElement("task-bar")
class TaskBar extends LitElement {
  static styles = [shared, css`
    :host { display: flex; height: 58px; border-top: 2px solid #1f426f; background: #0b3570; color: #fff; font: 14px/20px "Noto Sans", sans-serif; }
    .weather { display: flex; flex: none; width: 496px; padding: 7px 0 0 26px; }
    .reading { margin-left: 4px; }
    .sub { color: #b4c4dc; }
    .app { display: flex; flex: none; flex-direction: column; align-items: center; width: 52.880px; padding-top: 3px; }
    .tile { display: flex; align-items: center; justify-content: center; width: 48px; height: 48px; position: relative; border-radius: 6px; }
    .active .tile { background: #1d457c; border: 1px solid #2c5287; box-shadow: inset -6px 0 0 -1px #18407a; }
    .mark { position: absolute; bottom: 1px; left: 50%; width: 8px; height: 4px; border-radius: 2px; transform: translateX(-50%); background: #8fa2bf; }
    .active .mark { width: 20px; bottom: 0; background: #4cc2ff; }
    .tray { display: flex; align-items: center; margin-left: auto; padding-right: 24px; }
    .net { margin-left: 22px; }
    .vol { margin-left: 9px; }
    .clock { width: 66px; margin: -2px 0 0 18px; text-align: right; white-space: nowrap; letter-spacing: -.1px; }
  `];
  render() {
    return html`
      <div class="weather">
        ${icon(31, 34, "0 0 31 34", svg`<defs><linearGradient id="sun" x1=".1" y1="0" x2=".8" y2="1"><stop offset="0" stop-color="#f5c037"/><stop offset="1" stop-color="#f0660a"/></linearGradient></defs><circle cx="12" cy="19" r="12" fill="url(#sun)"/><circle cx="20.300" cy="8.300" r="9.500" fill="#ff99a4"/><text x="20.300" y="13" text-anchor="middle" font-family="Noto Sans,sans-serif" font-size="13" fill="#000">2</text>`)}
        <div class="reading"><div>79°F</div><div class="sub">Sunny</div></div>
      </div>
      ${APPS.map((a) => html`
        <div class=${classMap({ app: true, active: a.state === "active" })}>
          <div class="tile">${a.icon()}${a.state === "idle" ? nothing : html`<span class="mark"></span>`}</div>
        </div>`)}
      <div class="tray">
        ${icon(14, 9, "0 0 14 9", svg`<path d="M1 7.500l6-6 6 6" stroke="#fff" stroke-width="1.700"/>`)}
        <span class="net">${icon(20, 20, "0 0 20 20", svg`<path d="M12.500 1.500H2A1.300 1.300 0 0 0 .7 2.800v11.400a1.300 1.300 0 0 0 1.300 1.300h12.500M5.500 15.500v3M12.500 15.500v3M4 19h11" stroke="#fff" stroke-width="1.300"/><path d="M14 1.200h5v5.500h-5zM14 3.500h5M16.800 7v12" stroke="#fff" stroke-width="1.300"/>`)}</span>
        <span class="vol">${icon(20, 16, "0 0 20 16", svg`<path d="M1 5.300h3l4.500-4v13.400l-4.500-4H1z" stroke="#fff" stroke-width="1.300"/><path d="M11 5.500a4 4 0 0 1 0 5M13.500 3a7.500 7.500 0 0 1 0 10M16 .8a11 11 0 0 1 0 14.400" stroke="#fff" stroke-width="1.300"/>`)}</span>
        <div class="clock"><div>10:54 AM</div><div>4/13/2025</div></div>
      </div>`;
  }
}

@customElement("app-root")
class AppRoot extends LitElement {
  static styles = [shared, css`
    :host { display: block; width: 2048px; height: 1152px; overflow: hidden; background: #242631; }
    .chrome { height: 92px; border-radius: 10px 10px 0 0; background: #45454f; }
  `];
  render() {
    return html`
      <tab-strip></tab-strip>
      <div class="chrome"><address-row></address-row><bookmark-row></bookmark-row></div>
      <landing-page></landing-page>
      <task-bar></task-bar>`;
  }
}
